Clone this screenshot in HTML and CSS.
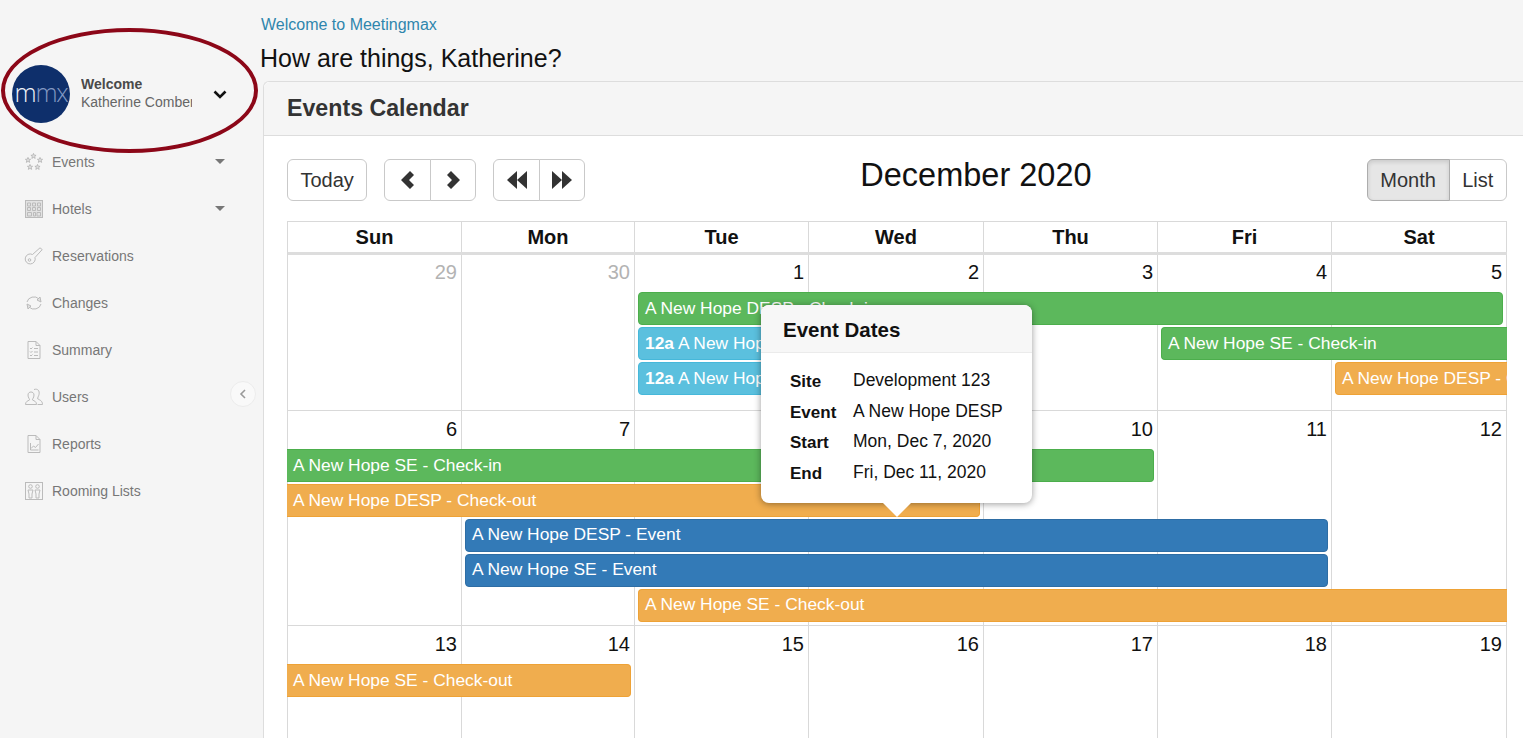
FILE: index.html
```html
<!DOCTYPE html>
<html lang="en">
<head>
<meta charset="utf-8">
<title>Meetingmax</title>
<link rel="stylesheet" href="styles.css">
</head>
<body>
<svg class="defs" width="0" height="0" aria-hidden="true">
  <defs>
    <polygon id="star" points="0,-2.6 .8,-.8 2.6,-.7 1.2,.5 1.7,2.4 0,1.4 -1.7,2.4 -1.2,.5 -2.6,-.7 -.8,-.8"/>
  </defs>
</svg>
<aside class="sidebar">
  <div class="user">
    <div class="avatar"><span class="logo-m">m</span><span class="logo-mx">mx</span></div>
    <div class="user-text">
      <div class="user-hello">Welcome</div>
      <div class="user-name">Katherine Comber</div>
    </div>
    <svg class="user-chevron" viewBox="0 0 14 9"><polyline points="1.5,1.5 7,7 12.5,1.5"/></svg>
  </div>
  <nav class="nav">
    <a class="nav-item">
      <svg class="icon" viewBox="0 0 18 18"><use href="#star" x="8.5" y="3"/><use href="#star" x="3" y="7"/><use href="#star" x="15" y="7"/><use href="#star" x="5" y="14"/><use href="#star" x="12.5" y="14"/></svg>
      <span>Events</span><i class="caret"></i>
    </a>
    <a class="nav-item">
      <svg class="icon" viewBox="0 0 18 18"><rect class="fill" x=".5" y=".5" width="17" height="17"/><path d="M2.5 3h3v3h-3zM7.5 3h3v3h-3zM12.5 3h3v3h-3zM2.5 7.5h3v3h-3zM7.5 7.5h3v3h-3zM12.5 7.5h3v3h-3zM2.5 12.5h4v3.500h-4zM8.500 12.500h2v3.500h-2zM12 12.500h3.500v3.500H12z"/></svg>
      <span>Hotels</span><i class="caret"></i>
    </a>
    <a class="nav-item">
      <svg class="icon" viewBox="0 0 18 18"><path d="M7.500 7.500 15 .8l2.200 1.800L10 10.500a5 5 0 1 1-2.500-3z"/><circle cx="4.500" cy="13" r="1.300"/></svg>
      <span>Reservations</span>
    </a>
    <a class="nav-item">
      <svg class="icon" viewBox="0 0 18 18"><path d="M2 8a7 6.500 0 0 1 12-3"/><path d="M16 10a7 6.500 0 0 1-12 3"/><polygon class="fill" points="16,8 12,6 15,3"/><polygon class="fill" points="2,10 6,12 3,15"/></svg>
      <span>Changes</span>
    </a>
    <a class="nav-item">
      <svg class="icon" viewBox="0 0 18 18"><path d="M3 .5h8l4 4v13H3z"/><path d="M11 .5v4h4M5 7l1 1 1.500-1.500M9 7.500h4M5 10.500l1 1 1.500-1.500M9 11h4M5 14l1 1 1.500-1.500M9 14.500h4"/></svg>
      <span>Summary</span>
    </a>
    <a class="nav-item">
      <svg class="icon" viewBox="0 0 18 18"><path d="M.5 16.500c0-3 2-3.500 4-4.500.5-1-1.500-2-1.500-5 0-4 6-4 6 0 0 3-2 4-1.500 5 2 1 4 1.500 4 4.500z"/><path d="M9 1.500c4-1.200 5.800 1.500 5 5-.3 1.700-1.600 3-1.200 4.500 1.700 1 4.700 1.500 4.700 5.500h-5"/></svg>
      <span>Users</span>
    </a>
    <a class="nav-item">
      <svg class="icon" viewBox="0 0 18 18"><path d="M3 .5h8l4 4v13H3z"/><path d="M11 .5v4h4M5.500 8v7h8M6 13.500l2.500-2.500 2 1.500 3-3.500"/></svg>
      <span>Reports</span>
    </a>
    <a class="nav-item">
      <svg class="icon" viewBox="0 0 18 18"><rect x=".5" y=".5" width="17" height="17"/><circle cx="5.500" cy="4.500" r="1.800"/><circle cx="12.500" cy="4.500" r="1.800"/><path d="M3 8h5l-1 4v4H4v-4zM10 8h5l-1 4v4h-3v-4z"/></svg>
      <span>Rooming Lists</span>
    </a>
  </nav>
  <button class="collapse" type="button" aria-label="Collapse"><svg viewBox="0 0 8 10"><polyline points="6,1 2,5 6,9"/></svg></button>
  <div class="highlight"></div>
</aside>
<main class="main">
  <div class="welcome">Welcome to Meetingmax</div>
  <h1 class="greeting">How are things, Katherine?</h1>
  <section class="panel">
    <h2 class="panel-title">Events Calendar</h2>
    <div class="panel-body">
      <div class="toolbar">
        <div class="tool-group">
          <button class="btn btn-today" type="button">Today</button>
          <div class="btn-set">
            <button class="btn btn-icon" type="button" aria-label="Previous"><svg viewBox="0 0 14 18"><polygon points="9,0 13,4 8,9 13,14 9,18 0,9"/></svg></button>
            <button class="btn btn-icon" type="button" aria-label="Next"><svg viewBox="0 0 14 18"><polygon points="5,0 1,4 6,9 1,14 5,18 14,9"/></svg></button>
          </div>
          <div class="btn-set">
            <button class="btn btn-icon" type="button" aria-label="Previous year"><svg class="wide" viewBox="0 0 20 18"><polygon points="10,0 10,18 0,9"/><polygon points="20,0 20,18 10,9"/></svg></button>
            <button class="btn btn-icon" type="button" aria-label="Next year"><svg class="wide" viewBox="0 0 20 18"><polygon points="0,0 0,18 10,9"/><polygon points="10,0 10,18 20,9"/></svg></button>
          </div>
        </div>
        <div class="cal-title">December 2020</div>
        <div class="btn-set">
          <button class="btn btn-view active" type="button">Month</button>
          <button class="btn btn-view" type="button">List</button>
        </div>
      </div>
      <div class="calendar">
        <div class="head">
          <div>Sun</div><div>Mon</div><div>Tue</div><div>Wed</div><div>Thu</div><div>Fri</div><div>Sat</div>
        </div>
        <div class="week week-1">
          <div class="cell muted">29</div><div class="cell muted">30</div><div class="cell">1</div><div class="cell">2</div><div class="cell">3</div><div class="cell">4</div><div class="cell">5</div>
          <div class="ev green r2 s3 e8">A New Hope DESP - Check-in</div>
          <div class="ev cyan r3 s3 e4"><b>12a</b> A New Hope DESP - Site</div>
          <div class="ev green r3 s6 e8 open-r">A New Hope SE - Check-in</div>
          <div class="ev cyan r4 s3 e4"><b>12a</b> A New Hope SE - Site</div>
          <div class="ev orange r4 s7 e8 open-r">A New Hope DESP - Check-out</div>
        </div>
        <div class="week week-2">
          <div class="cell">6</div><div class="cell">7</div><div class="cell">8</div><div class="cell">9</div><div class="cell">10</div><div class="cell">11</div><div class="cell">12</div>
          <div class="ev green r2 s1 e6 open-l">A New Hope SE - Check-in</div>
          <div class="ev orange r3 s1 e5 open-l">A New Hope DESP - Check-out</div>
          <div class="ev blue r4 s2 e7">A New Hope DESP - Event</div>
          <div class="ev blue r5 s2 e7">A New Hope SE - Event</div>
          <div class="ev orange r6 s3 e8 open-r">A New Hope SE - Check-out</div>
        </div>
        <div class="week week-3">
          <div class="cell">13</div><div class="cell">14</div><div class="cell">15</div><div class="cell">16</div><div class="cell">17</div><div class="cell">18</div><div class="cell">19</div>
          <div class="ev orange r2 s1 e3 open-l">A New Hope SE - Check-out</div>
        </div>
        <div class="popover">
          <h3 class="pop-title">Event Dates</h3>
          <dl class="pop-body">
            <dt>Site</dt><dd>Development 123</dd>
            <dt>Event</dt><dd>A New Hope DESP</dd>
            <dt>Start</dt><dd>Mon, Dec 7, 2020</dd>
            <dt>End</dt><dd>Fri, Dec 11, 2020</dd>
          </dl>
        </div>
      </div>
    </div>
  </section>
</main>
</body>
</html>
```

FILE: styles.css
```css
* { box-sizing: border-box; }
html, body { height: 100%; }
:root { --cols: 174px 173px 174px 175px 174px 174px 175px; }
body {
  margin: 0;
  display: flex;
  height: 738px;
  overflow: hidden;
  background: #f5f5f5;
  font-family: "Liberation Sans", Arial, sans-serif;
  color: #000;
}
.defs { position: absolute; }

/* Sidebar */
.sidebar {
  position: relative;
  flex: 0 0 263px;
  padding-top: 65px;
}
.user { display: flex; align-items: center; height: 58px; padding: 0 36px 0 12px; }
.avatar {
  flex: 0 0 58px;
  min-width: 0;
  height: 58px;
  border-radius: 50%;
  background: #0e2f6b;
  display: flex;
  align-items: center;
  justify-content: center;
  overflow: hidden;
  font-family: "Open Sans", sans-serif;
  font-weight: 300;
  font-size: 25px;
  letter-spacing: -1.2px;
  padding-bottom: 5px;
}
.logo-m { color: #f0f3f8; }
.logo-mx { color: #8298c2; }
.user-text { margin-left: 11px; width: 111px; overflow: hidden; white-space: nowrap; font-size: 14px; color: #666; }
.user-hello { font-weight: bold; font-size: 14px; color: #4a4a4a; line-height: 17px; }
.user-name { line-height: 19px; }
.user-chevron { width: 14px; height: 9px; margin-left: auto; fill: none; stroke: #111; stroke-width: 2.6; }
.nav { margin-top: 15px; }
.nav-item {
  display: flex;
  align-items: center;
  height: 47px;
  padding: 0 38px 0 25px;
  font-size: 14px;
  color: #777;
}
.icon { width: 18px; height: 18px; margin-right: 9px; fill: none; stroke: #bbb; stroke-width: 1; flex: none; overflow: visible; }
.icon use { fill: #dedede; stroke: #aeaeae; stroke-width: .7; }
.icon .fill { fill: #e2e2e2; }
.caret {
  margin-left: auto;
  width: 0;
  height: 0;
  border-left: 5px solid transparent;
  border-right: 5px solid transparent;
  border-top: 5px solid #777;
}
.collapse {
  position: absolute;
  left: 230px;
  top: 381px;
  width: 26px;
  height: 26px;
  padding: 0;
  border-radius: 50%;
  border: 1px solid #ececec;
  background: #f9f9f9;
  display: flex;
  align-items: center;
  justify-content: center;
}
.collapse svg { width: 8px; height: 10px; fill: none; stroke: #999; stroke-width: 1.6; }
.highlight {
  position: absolute;
  left: 1px;
  top: 28px;
  width: 257px;
  height: 125px;
  border: 4px solid #8c0718;
  border-radius: 50%;
}

/* Main */
.main { flex: 1; min-width: 0; display: flex; flex-direction: column; }
.welcome { margin-left: -2px; padding-top: 16px; font-size: 16px; line-height: 18px; color: #2f86ad; }
.greeting { margin: 10px 0 9px -3px; font-size: 25px; line-height: 28px; font-weight: normal; color: #111; }
.panel {
  flex: 1;
  background: #fff;
  border-top: 1px solid #ddd;
  border-left: 1px solid #ddd;
  border-top-left-radius: 6px;
}
.panel-title {
  margin: 0;
  height: 54px;
  padding-left: 23px;
  font-size: 23.2px;
  line-height: 52px;
  color: #333;
  background: #f5f5f5;
  border-bottom: 1px solid #ddd;
  border-top-left-radius: 6px;
}
.panel-body { padding: 23px 16px 0 23px; }

/* Toolbar */
.toolbar { display: flex; justify-content: space-between; align-items: flex-start; height: 62px; }
.tool-group { display: flex; gap: 17px; }
.btn-set { display: flex; }
.btn {
  height: 42px;
  padding: 0 12px;
  background: #fff;
  border: 1px solid #c9c9c9;
  border-radius: 6px;
  color: #333;
  font: 20px/1 "Liberation Sans", Arial, sans-serif;
}
.btn-today { padding: 0 12.5px; }
.btn-set .btn:first-child { border-radius: 6px 0 0 6px; }
.btn-set .btn:last-child { border-radius: 0 6px 6px 0; margin-left: -1px; }
.btn-icon { width: 46.5px; padding: 0; display: flex; align-items: center; justify-content: center; }
.btn-icon svg { width: 14px; height: 18px; fill: #333; }
.btn-icon svg.wide { width: 20px; }
.btn-view { padding: 0 12.7px; }
.btn-view.active { background: #e6e6e6; border-color: #adadad; box-shadow: inset 0 2px 4px rgba(0,0,0,.125); position: relative; }
.cal-title { font-size: 32.5px; line-height: 32px; color: #111; }

/* Calendar */
.calendar { position: relative; border-left: 1px solid #d9d9d9; border-top: 1px solid #d9d9d9; }
.head {
  display: grid;
  grid-template-columns: var(--cols);
  height: 33px;
  border-bottom: 3px solid #ddd;
}
.head > div {
  border-right: 1px solid #d9d9d9;
  text-align: center;
  font-weight: bold;
  font-size: 20px;
  line-height: 30px;
  color: #111;
}
.week {
  display: grid;
  grid-template-columns: var(--cols);
  border-bottom: 1px solid #d9d9d9;
}
.week-1 { grid-template-rows: 37px 35px 35px 35px 13px; }
.week-2 { grid-template-rows: 38px 35px 35px 35px 35px 35px 1px; }
.week-3 { grid-template-rows: 38px 35px 200px; }
.cell {
  grid-row: 1 / -1;
  border-right: 1px solid #d9d9d9;
  padding: 5px 4px 0 0;
  text-align: right;
  font-size: 20px;
  line-height: 24px;
  color: #111;
}
.week-2 .cell, .week-3 .cell { padding-top: 6px; }
.cell:nth-child(1) { grid-column: 1; }
.cell:nth-child(2) { grid-column: 2; }
.cell:nth-child(3) { grid-column: 3; }
.cell:nth-child(4) { grid-column: 4; }
.cell:nth-child(5) { grid-column: 5; }
.cell:nth-child(6) { grid-column: 6; }
.cell:nth-child(7) { grid-column: 7; }
.muted { color: #b3b3b3; }
.ev {
  height: 33px;
  margin: 0 4px 0 3px;
  padding-left: 6px;
  border: 1px solid;
  border-radius: 4px;
  color: #fff;
  font-size: 17.4px;
  line-height: 30px;
  white-space: nowrap;
  overflow: hidden;
}
.week-2 .r4, .week-2 .r5, .week-2 .r6 { line-height: 29px; }
.open-l { margin-left: -1px; border-left: 0; border-radius: 0 4px 4px 0; }
.open-r { margin-right: 0; border-right: 0; border-radius: 4px 0 0 4px; }
.green { background: #5cb85c; border-color: #4cae4c; }
.cyan { background: #5bc0de; border-color: #46b8da; }
.orange { background: #f0ad4e; border-color: #eea236; }
.blue { background: #337ab7; border-color: #2e6da4; }
.r2 { grid-row-start: 2; }
.r3 { grid-row-start: 3; }
.r4 { grid-row-start: 4; }
.r5 { grid-row-start: 5; }
.r6 { grid-row-start: 6; }
.s1 { grid-column-start: 1; }
.s2 { grid-column-start: 2; }
.s3 { grid-column-start: 3; }
.s6 { grid-column-start: 6; }
.s7 { grid-column-start: 7; }
.e3 { grid-column-end: 3; }
.e4 { grid-column-end: 4; }
.e5 { grid-column-end: 5; }
.e6 { grid-column-end: 6; }
.e7 { grid-column-end: 7; }
.e8 { grid-column-end: 8; }

/* Popover */
.popover {
  position: absolute;
  left: 473px;
  top: 83px;
  width: 271px;
  height: 198px;
  background: #fff;
  border-radius: 8px;
  box-shadow: 0 1px 7px rgba(0,0,0,.4);
}
.popover::after {
  content: "";
  position: absolute;
  left: 122px;
  top: 198px;
  width: 0;
  height: 0;
  border-left: 14px solid transparent;
  border-right: 14px solid transparent;
  border-top: 14px solid #fff;
}
.pop-title {
  margin: 0;
  height: 48px;
  padding-left: 22px;
  background: #f7f7f7;
  border-bottom: 1px solid #ebebeb;
  border-radius: 8px 8px 0 0;
  font-size: 20.5px;
  line-height: 50px;
  color: #111;
}
.pop-body {
  margin: 0;
  padding: 13px 0 0 29px;
  display: grid;
  grid-template-columns: 63px 1fr;
  grid-auto-rows: 30.6px;
  font-size: 17.5px;
  line-height: 29px;
  color: #111;
}
.pop-body dt { font-weight: bold; font-size: 17px; line-height: 31px; }
.pop-body dd { margin: 0; }
```
